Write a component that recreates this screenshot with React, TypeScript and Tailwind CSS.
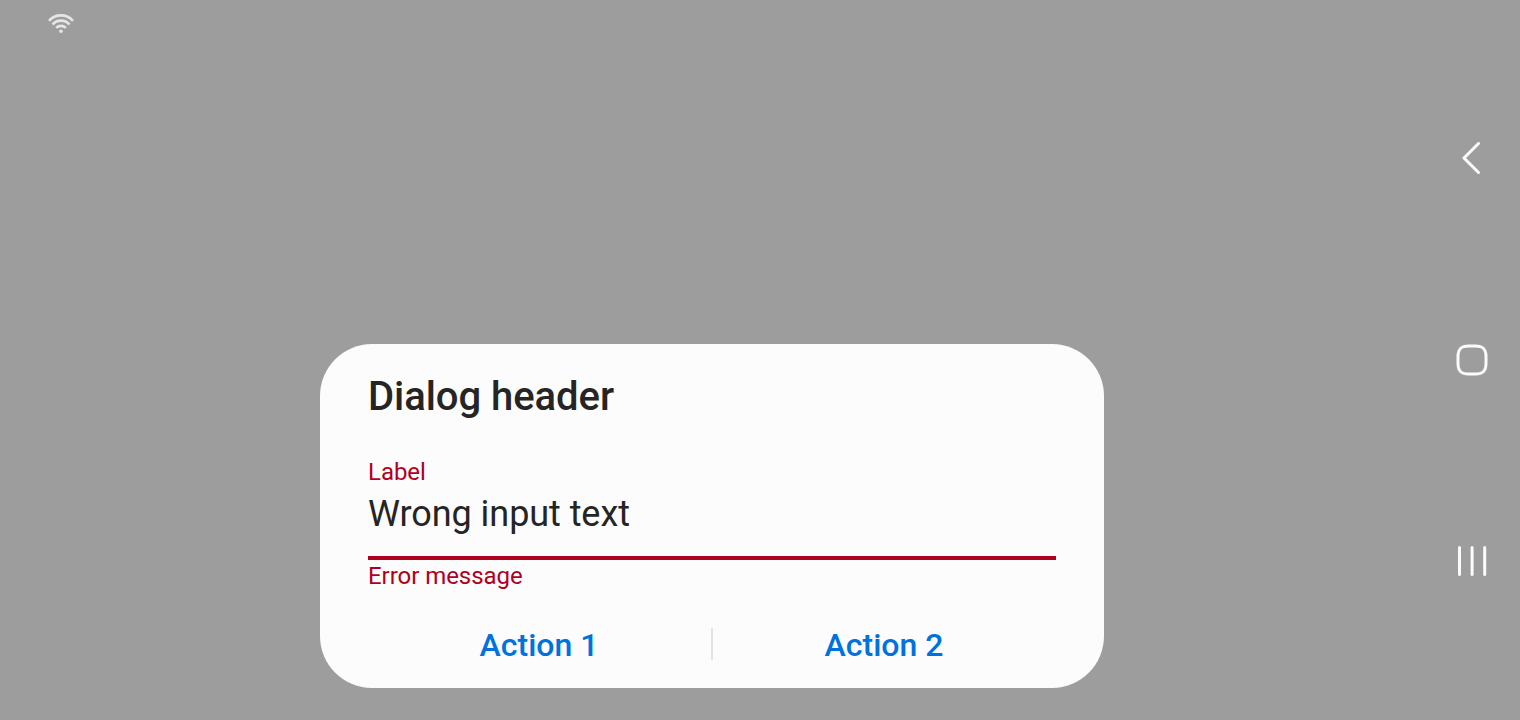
export default function App() {
  return (
    <main className="flex h-[720px] w-[1520px] overflow-hidden bg-[#9d9d9d] font-['Roboto',sans-serif]">
      <header className="w-80 shrink-0 pt-[13px] pl-12">
        <svg width="26" height="21" viewBox="0 -1 26 21" fill="none" stroke="#e6e6e6" strokeWidth="2.6">
          <path d="M1 6.900A15.800 15.800 0 0 1 25 6.900M4.500 10.500A11.300 11.300 0 0 1 21.500 10.500M8.200 13.900A6.700 6.700 0 0 1 17.800 13.900" />
          <circle cx="13" cy="17.300" r="1.800" fill="#e6e6e6" stroke="none" />
        </svg>
      </header>
      <section className="mt-[344px] flex h-[344px] w-[784px] shrink-0 flex-col rounded-[52px] bg-[#fcfcfc] px-12">
        <h1 className="mt-[29px] h-12 text-[40px] leading-[48px] font-medium tracking-[-0.05px] whitespace-nowrap text-[#252525]">Dialog header</h1>
        <label className="mt-[35px] h-8 text-[24px] leading-8 tracking-[-0.05px] text-[#b00020]">Label</label>
        <div className="h-[72px] border-b-4 border-[#b00020] pt-[2px] text-[36px] leading-[48px] tracking-[-0.06px] text-[#252525]">Wrong input text</div>
        <p className="h-8 text-[24px] leading-8 tracking-[-0.05px] text-[#b00020]">Error message</p>
        <div className="mt-[34px] flex h-9 items-center text-[32px] leading-9 font-medium text-[#0072de]">
          <button className="flex-1 pt-[2px] pr-px">Action 1</button>
          <span className="h-8 w-0.5 bg-[#e3e3e3]" />
          <button className="flex-1 pt-[2px] pr-px">Action 2</button>
        </div>
      </section>
      <nav className="ml-[320px] flex w-24 shrink-0 flex-col items-center">
        <svg className="mt-[142px]" width="32" height="32" viewBox="0 0 32 32" fill="none" stroke="#fcfcfc" strokeWidth="3" strokeLinecap="round" strokeLinejoin="round"><path d="M22.500 1.500L8 16L22.500 30.500" /></svg>
        <svg className="mt-[170px]" width="32" height="32" viewBox="0 0 32 32" fill="none" stroke="#fcfcfc" strokeWidth="3"><path d="M12.500 2H19.500C27 2 30 5 30 12.500V19.500C30 27 27 30 19.500 30H12.500C5 30 2 27 2 19.500V12.500C2 5 5 2 12.500 2Z" /></svg>
        <svg className="mt-[169px]" width="32" height="32" viewBox="0 0 32 32" fill="none" stroke="#fcfcfc" strokeWidth="3" strokeLinecap="round"><path d="M3.500 2.500V29.500M16.100 2.500V29.500M28.700 2.500V29.500" /></svg>
      </nav>
    </main>
  );
}
